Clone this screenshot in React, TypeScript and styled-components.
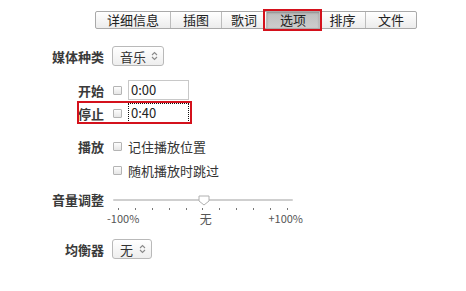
import styled, { createGlobalStyle } from 'styled-components'

const GlobalStyle = createGlobalStyle`
  body {
    margin: 0;
    background: #fff;
    font-family: "Noto Sans CJK SC", "Liberation Sans", sans-serif;
    color: #333;
  }
`

const Page = styled.div`
  width: 466px;
  height: 291px;
  padding-top: 11px;
  box-sizing: border-box;
  overflow: hidden;
`

const TabBar = styled.div`
  display: flex;
  margin-left: 95px;
  height: 18px;
  border: 1px solid #a9a9a9;
  border-radius: 2px;
  width: fit-content;
  box-sizing: border-box;
  background: linear-gradient(#ffffff, #ececec);
`

const Tab = styled.div<{ $width: number; $active?: boolean }>`
  width: ${({ $width }) => $width}px;
  display: flex;
  align-items: center;
  justify-content: center;
  font-size: 13px;
  line-height: 16px;
  color: #222;
  border-left: 1px solid #bcbcbc;
  box-sizing: border-box;
  &:first-child {
    border-left: none;
  }
  ${({ $active }) =>
    $active &&
    `
    background: linear-gradient(#bdbdbd, #cdcdcd);
    box-shadow: inset 0 1px 2px rgba(0,0,0,0.25);
    outline: 2px solid #d4111c;
    outline-offset: 1px;
  `}
`

const Row = styled.div<{ $top: number; $height?: number; $highlight?: boolean; $alignTop?: boolean }>`
  position: relative;
  display: flex;
  align-items: ${({ $alignTop }) => ($alignTop ? 'flex-start' : 'center')};
  margin-top: ${({ $top }) => $top}px;
  height: ${({ $height }) => $height ?? 20}px;
  ${({ $highlight }) =>
    $highlight &&
    `
    &::after {
      content: '';
      position: absolute;
      left: 77px;
      width: 115px;
      top: -2px;
      bottom: -1px;
      border: 2px solid #d4111c;
      box-sizing: border-box;
    }
  `}
`

const Label = styled.div<{ $lineHeight?: number }>`
  width: 104px;
  padding-right: 8px;
  box-sizing: content-box;
  text-align: right;
  font-size: 13px;
  font-weight: bold;
  color: #3a3a3a;
  flex-shrink: 0;
  ${({ $lineHeight }) => $lineHeight && `line-height: ${$lineHeight}px;`}
`

const Spacer = styled.div`
  width: 112px;
  flex-shrink: 0;
`

const Select = styled.div<{ $width: number }>`
  width: ${({ $width }) => $width}px;
  height: 20px;
  box-sizing: border-box;
  display: flex;
  align-items: center;
  justify-content: space-between;
  padding: 0 5px 0 7px;
  border: 1px solid #b9b9b9;
  border-radius: 3px;
  background: linear-gradient(#ffffff, #eeeeee);
  font-size: 13px;
  color: #333;
`

const Check = styled.span`
  display: inline-block;
  width: 9px;
  height: 9px;
  margin-left: 1px;
  box-sizing: border-box;
  border: 1px solid #b4b4b4;
  border-radius: 1px;
  background: linear-gradient(#fdfdfd, #e6e6e6);
  flex-shrink: 0;
`

const TimeInput = styled.div<{ $focused?: boolean }>`
  width: 61px;
  height: 20px;
  margin-left: 6px;
  box-sizing: border-box;
  border: 1px solid #c8c8c8;
  padding-left: 2px;
  font-size: 13px;
  line-height: 18px;
  color: #222;
  ${({ $focused }) =>
    $focused &&
    `
    border: 1px dotted #111;
  `}
`

const OptionText = styled.span`
  margin-left: 6px;
  font-size: 13px;
  color: #333;
`

const Slider = styled.div`
  display: flex;
  flex-direction: column;
  width: 196px;
  margin-left: -5px;
`

const Track = styled.div`
  position: relative;
  height: 14px;
  margin: 0 10px 0 6px;
  &::before {
    content: '';
    position: absolute;
    left: 0;
    right: 0;
    top: 6px;
    height: 2px;
    background: #cfcfcf;
    border-radius: 1px;
  }
`

const Thumb = styled.svg`
  position: absolute;
  top: 2px;
  left: 85px;
`

const Ticks = styled.div`
  display: flex;
  justify-content: space-between;
  margin: 1px 15px 0 11px;
  height: 2px;
`

const Tick = styled.span`
  width: 1px;
  height: 2px;
  background: #777;
`

const SliderLabels = styled.div`
  display: flex;
  justify-content: space-between;
  align-items: center;
  font-size: 11px;
  color: #555;
  height: 14px;
  margin-top: 1px;
`

const MidLabel = styled.span`
  font-size: 12px;
  margin-left: 4px;
`

function UpDown() {
  return (
    <svg width="7" height="10" viewBox="0 0 7 10" fill="none" stroke="#8a8a8a" strokeWidth="1.1">
      <path d="M1 4 L3.5 1.5 L6 4" />
      <path d="M1 6 L3.5 8.5 L6 6" />
    </svg>
  )
}

const tabs = [
  { name: '详细信息', width: 74 },
  { name: '插图', width: 51 },
  { name: '歌词', width: 45 },
  { name: '选项', width: 53, active: true },
  { name: '排序', width: 46 },
  { name: '文件', width: 51 },
]

export default function App() {
  return (
    <Page>
      <GlobalStyle />
      <TabBar>
        {tabs.map((t) => (
          <Tab key={t.name} $width={t.width} $active={t.active}>
            {t.name}
          </Tab>
        ))}
      </TabBar>

      <Row $top={17}>
        <Label>媒体种类</Label>
        <Select $width={52}>
          <span>音乐</span>
          <UpDown />
        </Select>
      </Row>

      <Row $top={14}>
        <Label>开始</Label>
        <Check />
        <TimeInput>0:00</TimeInput>
      </Row>

      <Row $top={3} $highlight>
        <Label>停止</Label>
        <Check />
        <TimeInput $focused>0:40</TimeInput>
      </Row>

      <Row $top={13}>
        <Label>播放</Label>
        <Check />
        <OptionText>记住播放位置</OptionText>
      </Row>

      <Row $top={4}>
        <Spacer />
        <Check />
        <OptionText>随机播放时跳过</OptionText>
      </Row>

      <Row $top={13} $height={32} $alignTop>
        <Label $lineHeight={14}>音量调整</Label>
        <Slider>
          <Track>
            <Thumb width="12" height="11" viewBox="0 0 12 11">
              <path d="M1 1 H11 V6 L6 10 L1 6 Z" fill="#fff" stroke="#b0b0b0" strokeWidth="1" />
            </Thumb>
          </Track>
          <Ticks>
            {Array.from({ length: 11 }).map((_, i) => (
              <Tick key={i} />
            ))}
          </Ticks>
          <SliderLabels>
            <span>-100%</span>
            <MidLabel>无</MidLabel>
            <span>+100%</span>
          </SliderLabels>
        </Slider>
      </Row>

      <Row $top={14}>
        <Label>均衡器</Label>
        <Select $width={40}>
          <span>无</span>
          <UpDown />
        </Select>
      </Row>
    </Page>
  )
}
